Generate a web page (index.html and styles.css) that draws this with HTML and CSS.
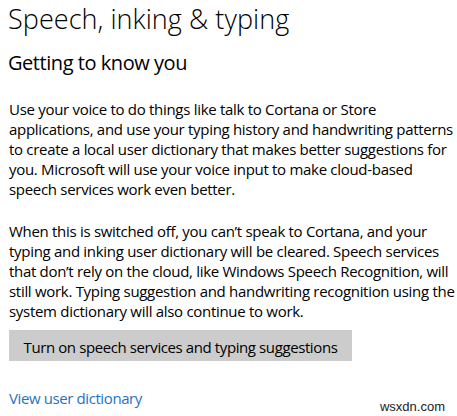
FILE: index.html
```html
<!DOCTYPE html>
<html lang="en">
<head>
<meta charset="utf-8">
<title>Speech, inking &amp; typing</title>
<link rel="stylesheet" href="styles.css">
</head>
<body>
<main class="page">
  <h1 class="title">Speech, inking &amp; typing</h1>
  <h2 class="subtitle">Getting to know you</h2>
  <p class="para">Use your voice to do things like talk to Cortana or Store<br>applications, and use your typing history and handwriting patterns<br>to create a local user dictionary that makes better suggestions for<br>you. Microsoft will use your voice input to make cloud-based<br>speech services work even better.</p>
  <p class="para para-second">When this is switched off, you can’t speak to Cortana, and your<br>typing and inking user dictionary will be cleared. Speech services<br>that don’t rely on the cloud, like Windows Speech Recognition, will<br>still work. Typing suggestion and handwriting recognition using the<br>system dictionary will also continue to work.</p>
  <button class="btn" type="button">Turn on speech services and typing suggestions</button>
  <a class="link" href="#">View user dictionary</a>
  <span class="watermark">wsxdn.com</span>
</main>
</body>
</html>
```

FILE: styles.css
```css
html, body {
  margin: 0;
  padding: 0;
  background: #ffffff;
}
.page {
  position: relative;
  display: flex;
  flex-direction: column;
  align-items: flex-start;
  width: 457px;
  height: 416px;
  box-sizing: border-box;
  padding: 0 0 0 8px;
  font-family: "Open Sans", "Noto Sans", sans-serif;
  color: #000;
}
.title {
  margin: 0;
  font-weight: 300;
  font-size: 27px;
  line-height: 37px;
  letter-spacing: 0.05px;
}
.subtitle {
  margin: 13px 0 0;
  font-weight: 400;
  font-size: 20px;
  line-height: 26px;
  letter-spacing: -0.45px;
}
.para {
  margin: 23px 0 0 1px;
  font-size: 15px;
  line-height: 20px;
  letter-spacing: -0.3px;
  white-space: nowrap;
}
.para-second {
  margin-top: 22px;
}
.btn {
  display: block;
  margin: 9px 0 0 1px;
  width: 343px;
  height: 31px;
  border: none;
  background: #cccccc;
  color: #000;
  font-family: inherit;
  font-size: 15px;
  line-height: 20px;
  letter-spacing: -0.4px;
  padding: 2px 0 0;
}
.link {
  margin: 27px 0 0 1px;
  color: #1f72c4;
  text-decoration: none;
  font-size: 15px;
  line-height: 20px;
  letter-spacing: -0.4px;
}
.watermark {
  position: absolute;
  right: 12px;
  bottom: 2px;
  font-family: "Liberation Sans", Arial, sans-serif;
  font-size: 13px;
  line-height: 15px;
  color: #222;
}
```
